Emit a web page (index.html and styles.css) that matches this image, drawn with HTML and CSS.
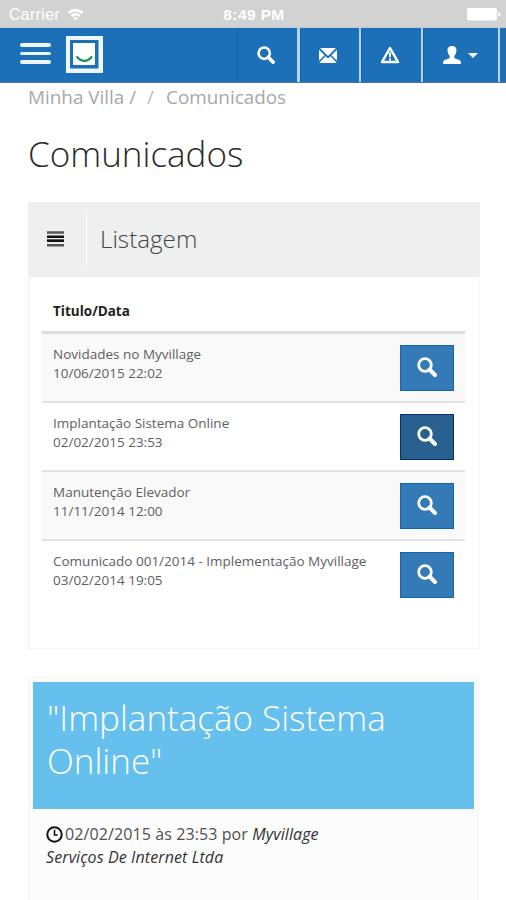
FILE: index.html
```html
<!DOCTYPE html>
<html lang="pt-BR">
<head>
<meta charset="utf-8">
<title>Comunicados</title>
<link rel="stylesheet" href="styles.css">
</head>
<body>
<svg class="defs" aria-hidden="true">
  <symbol id="search" viewBox="0 0 20 20"><circle cx="8" cy="8" r="6.3" fill="none" stroke="currentColor" stroke-width="2.8"/><path d="M12.5 12.5L18 18" stroke="currentColor" stroke-width="4" stroke-linecap="round"/></symbol>
</svg>
<div class="status">
  <div class="carrier"><span>Carrier</span>
    <svg class="wifi" viewBox="0 0 16 12"><path d="M0.5 3.6Q8 -2.6 15.5 3.6L13.8 5.5Q8 .8 2.2 5.5ZM3.2 6.4Q8 2.6 12.8 6.4L11.1 8.3Q8 6 4.9 8.3ZM5.8 9.2Q8 7.6 10.2 9.2L8 11.7Z" fill="currentColor"/></svg>
  </div>
  <span class="time">8:49 PM</span>
  <svg class="battery" viewBox="0 0 34 13"><rect width="30" height="12.5" rx="2" fill="currentColor"/><path d="M31 4Q33.5 4.5 33.5 6.2T31 8.5Z" fill="currentColor"/></svg>
</div>
<header class="navbar">
  <div class="burger"><i></i><i></i><i></i></div>
  <svg class="logo" viewBox="0 0 37 37"><rect width="37" height="37" fill="#eef6fd"/><rect x="4" y="4" width="28.5" height="28.5" fill="#1b70b8"/><rect x="7" y="7" width="22" height="22" fill="#fff"/><path d="M10.5 20.5Q18.5 29.5 26 20.5" fill="none" stroke="#219653" stroke-width="2.3"/></svg>
  <nav class="tools">
    <a class="tool tool-search"><svg class="nav-search"><use href="#search"/></svg></a>
    <a class="tool tool-mail"><svg class="mail" viewBox="0 0 18 15"><path d="M1 0H17L9 8ZM0 1.7L5.6 7.3L0 12.8ZM18 1.7V12.8L12.4 7.3ZM6.5 8.2L9 10.5L11.5 8.2L17.2 14.2V15H.8V14.2Z" fill="currentColor"/></svg></a>
    <a class="tool tool-alert"><svg class="alert" viewBox="0 0 20 18"><path d="M10 2L18 16H2Z" fill="none" stroke="currentColor" stroke-width="2.5" stroke-linejoin="round"/><path d="M8.8 6.5H11.2L10.8 11.5H9.2ZM9 12.5H11V14.5H9Z" fill="currentColor"/></svg></a>
    <a class="tool tool-user"><svg class="user" viewBox="0 0 18 18"><path d="M9 0C12.6 0 13.8 2.3 13.4 5.2C13.2 7.5 12.3 8.9 11.3 9.8V12C13.5 13.1 17.5 13.8 17.9 15.8V18H.1V15.8C.5 13.8 4.5 13.1 6.7 12V9.8C5.7 8.9 4.8 7.5 4.6 5.2C4.2 2.3 5.4 0 9 0Z" fill="currentColor"/></svg><i class="caret"></i></a>
  </nav>
</header>
<main>
  <div class="crumbs"><span>Minha Villa /</span><span class="slash">/</span><span class="current">Comunicados</span></div>
  <h1>Comunicados</h1>
  <section class="panel">
    <div class="panel-head">
      <div class="list-box"><svg class="list" viewBox="0 0 17 16"><path d="M0 1.5H17M0 9.8H17M0 14.2H17" stroke="#555" stroke-width="2.4"/><path d="M0 5.7H17M0 9.8H17" stroke="#111" stroke-width="2.4"/></svg></div>
      <h2>Listagem</h2>
    </div>
    <div class="table">
      <div class="th"><span>Titulo/Data</span></div>
      <div class="row"><p>Novidades no Myvillage<br>10/06/2015 22:02</p><a class="btn"><svg><use href="#search"/></svg></a></div>
      <div class="row"><p>Implantação Sistema Online<br>02/02/2015 23:53</p><a class="btn active"><svg><use href="#search"/></svg></a></div>
      <div class="row"><p>Manutenção Elevador<br>11/11/2014 12:00</p><a class="btn"><svg><use href="#search"/></svg></a></div>
      <div class="row"><p>Comunicado 001/2014 - Implementação Myvillage<br>03/02/2014 19:05</p><a class="btn"><svg><use href="#search"/></svg></a></div>
    </div>
  </section>
  <article class="notice">
    <div class="notice-title"><h3>"Implantação Sistema Online"</h3></div>
    <p class="meta"><svg class="clock" viewBox="0 0 16 16"><circle cx="8" cy="8" r="6.8" fill="none" stroke="#111" stroke-width="1.9"/><path d="M8 3.5V8.5H11" fill="none" stroke="#111" stroke-width="1.5"/></svg><span>02/02/2015 às 23:53 por <em>Myvillage</em></span><br><em>Serviços De Internet Ltda</em></p>
  </article>
</main>
</body>
</html>
```
FILE: styles.css
```css
* { box-sizing: border-box; }
body { margin: 0; height: 900px; overflow: hidden; background: #fff; color: #333; font-family: "Open Sans", sans-serif; font-weight: 300; }
h1, h2, h3, p { margin: 0; font-weight: 300; }
svg { display: block; flex: none; }
.defs { display: none; }
span, h1, h2, em { white-space: nowrap; }

.status { height: 28px; background: #d2d2d2; border-bottom: 1px solid #bccad8; color: #fff; display: grid; grid-template-columns: 1fr auto 1fr; align-items: center; padding: 2px 5px 0 9px; font: 400 16px "Liberation Sans", sans-serif; }
.carrier { display: flex; align-items: center; gap: 7px; letter-spacing: .3px; }
.wifi { width: 17px; height: 13px; }
.time { font-weight: 700; font-size: 15.5px; letter-spacing: .4px; position: relative; left: -1px; }
.battery { width: 34px; height: 13px; justify-self: end; }

.navbar { height: 55px; background: #1b70b8; border-bottom: 1px solid #47759e; display: flex; align-items: center; padding-left: 20px; }
.burger { width: 31px; display: flex; flex-direction: column; gap: 5px; padding-bottom: 3px; }
.burger i { height: 3.4px; border-radius: 2px; background: #eef6fd; }
.logo { width: 37px; height: 37px; margin: 0 0 2px 15px; }
.tools { display: flex; align-self: stretch; margin: 0 6px 0 auto; }
.tool { display: flex; align-items: center; justify-content: center; color: #fff; border-right: 2px solid #b9d2f1; border-left: 1px solid #1262a8; }
.tool-search { width: 63px; border-right-width: 3px; padding-right: 4px; }
.tool-mail { width: 61px; padding-right: 4px; }
.tool-alert { width: 62px; padding-right: 4px; }
.tool-user { width: 77px; gap: 7px; padding-right: 2px; }
.nav-search { width: 18px; height: 18px; }
.mail { width: 18px; height: 15px; }
.alert { width: 20px; height: 18px; }
.user { width: 18px; height: 18px; }
.caret { border: 5.5px solid transparent; border-top-color: #fff; border-bottom: 0; }

main { padding: 0 26px 0 28px; }
.crumbs { height: 29px; display: flex; color: #a8a8a8; font-size: 18.9px; line-height: 29px; font-weight: 400; letter-spacing: -.01px; }
.slash { margin: 0 12px 0 11px; color: #bbb; }
h1 { font-size: 35px; line-height: 48px; margin-top: 18px; height: 72px; color: #2a2a2a; }
.panel { height: 448px; border: 2px solid #f7f7f7; border-top: 0; }
.panel-head { height: 75px; margin: 0 -2px; background: #efefef; display: flex; align-items: center; padding-bottom: 2px; }
.list-box { width: 59px; height: 60px; border-right: 1px solid #fafafa; display: flex; align-items: center; padding-left: 19px; }
.list { width: 17px; height: 16px; }
h2 { font-size: 24.2px; margin-left: 13px; color: #444; }
.table { margin: 15px 13px 0 12px; font-size: 13.5px; line-height: 19px; }
.th { height: 42px; border-bottom: 3px solid #ddd; padding: 10px 11px; font-weight: 700; font-size: 13.5px; color: #222; }
.row { height: 69px; border-bottom: 2px solid #e2e2e2; padding: 11px 11px 0; display: flex; justify-content: space-between; }
.row:nth-child(even) { background: #f9f9f9; }
.row:last-child { border-bottom: 0; }
.row p { font-weight: 400; color: #606060; white-space: nowrap; }
.btn { width: 54px; height: 46px; background: #337ab7; border: 1px solid #1466aa; color: #fff; display: flex; justify-content: center; padding: 11px 0 0; }
.btn svg { width: 20px; height: 20px; }
.btn.active { background: #286090; border-color: #062f6c; }

.notice { margin-top: 27px; height: 225px; border: 2px solid #f8f8f8; padding: 3px; background: #fcfcfc; margin-right: 1px; }
.notice-title { height: 127px; background: #66c0ee; color: #fff; padding: 14px 14px; }
h3 { font-size: 35px; line-height: 43px; }
.meta { padding: 14px 13px; font-size: 16px; line-height: 23px; color: #505050; font-weight: 400; letter-spacing: .1px; }
.meta em { color: #333; }
.clock { display: inline-block; width: 17px; height: 17px; vertical-align: -3px; margin-right: 2px; }
```
